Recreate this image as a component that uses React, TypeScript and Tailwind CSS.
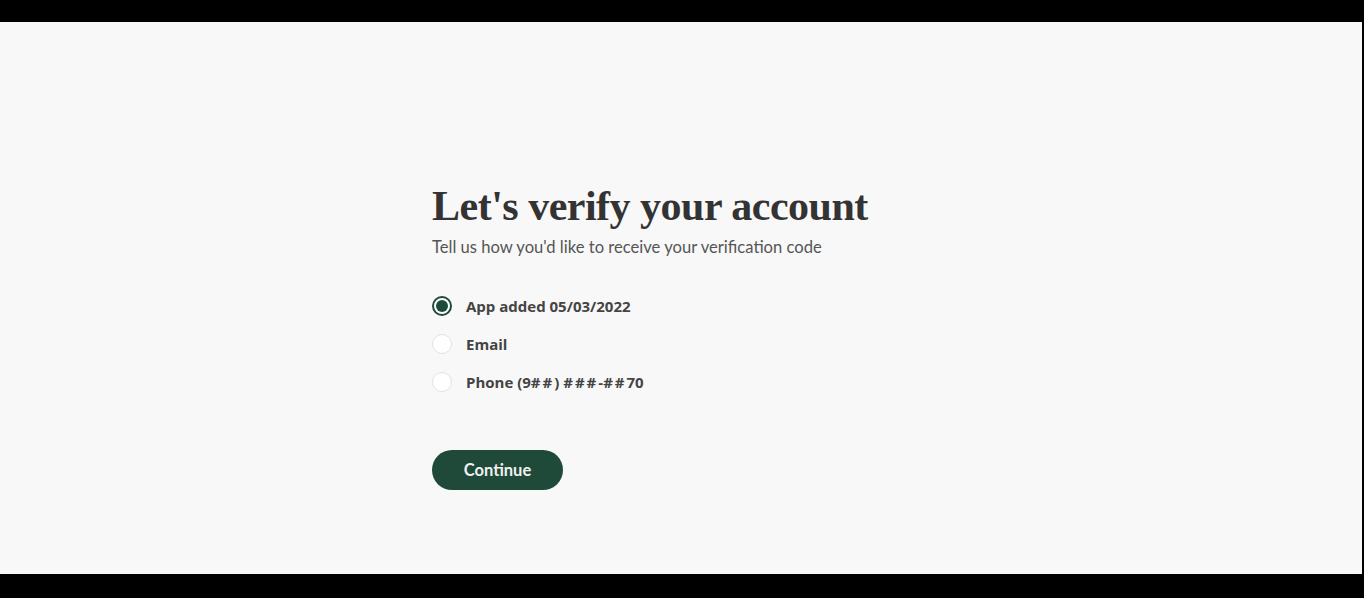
import { useState } from 'react';

const options = [
  { id: 'app', label: 'App added 05/03/2022' },
  { id: 'email', label: 'Email' },
  { id: 'phone', label: 'Phone (9##) ###-##70' },
];

// the reference font draws "#" wider than Open Sans does
function Label({ text }: { text: string }) {
  return (
    <>
      {text.split(/(#+)/).map((part, i) =>
        part.startsWith('#') ? (
          <span key={i} className="tracking-[2px]">{part}</span>
        ) : (
          <span key={i}>{part}</span>
        )
      )}
    </>
  );
}

export default function App() {
  const [selected, setSelected] = useState('app');

  return (
    <div className="h-[598px] w-[1364px] bg-black pt-[22px] pb-[24px] pr-[2px]">
      <div className="h-full bg-[#f8f8f8] pl-[432px] pt-[160px]">
        <h1
          className="text-[42px] font-bold leading-[48px] tracking-[-0.5px] text-[#333333]"
          style={{ fontFamily: "'Liberation Serif', serif" }}
        >
          Let's verify your account
        </h1>
        <p className="mt-[7px] text-[16.6px] leading-[20px] text-[#555555]" style={{ fontFamily: "Lato, sans-serif" }}>
          Tell us how you'd like to receive your verification code
        </p>

        <div className="mt-[39px] flex flex-col gap-[18px]">
          {options.map((o) => {
            const on = selected === o.id;
            return (
              <button
                key={o.id}
                onClick={() => setSelected(o.id)}
                className="flex items-center gap-[14px] text-left"
              >
                <span
                  className={
                    on
                      ? 'flex h-[20px] w-[20px] items-center justify-center rounded-full border-[2px] border-[#1e4a3a] bg-white'
                      : 'h-[20px] w-[20px] rounded-full border border-[#e2e2e2] bg-white'
                  }
                >
                  {on && <span className="h-[12px] w-[12px] rounded-full bg-[#1e4a3a]" />}
                </span>
                <span
                  className="text-[15px] font-bold leading-[20px] text-[#444444]"
                  style={{ fontFamily: "'Open Sans', sans-serif" }}
                >
                  <Label text={o.label} />
                </span>
              </button>
            );
          })}
        </div>

        <button
          className="mt-[58px] h-[40px] w-[131px] rounded-full bg-[#1f4a3a] text-[16.5px] font-bold text-[#f0f0f0]"
          style={{ fontFamily: "Lato, sans-serif" }}
        >
          Continue
        </button>
      </div>
    </div>
  );
}
